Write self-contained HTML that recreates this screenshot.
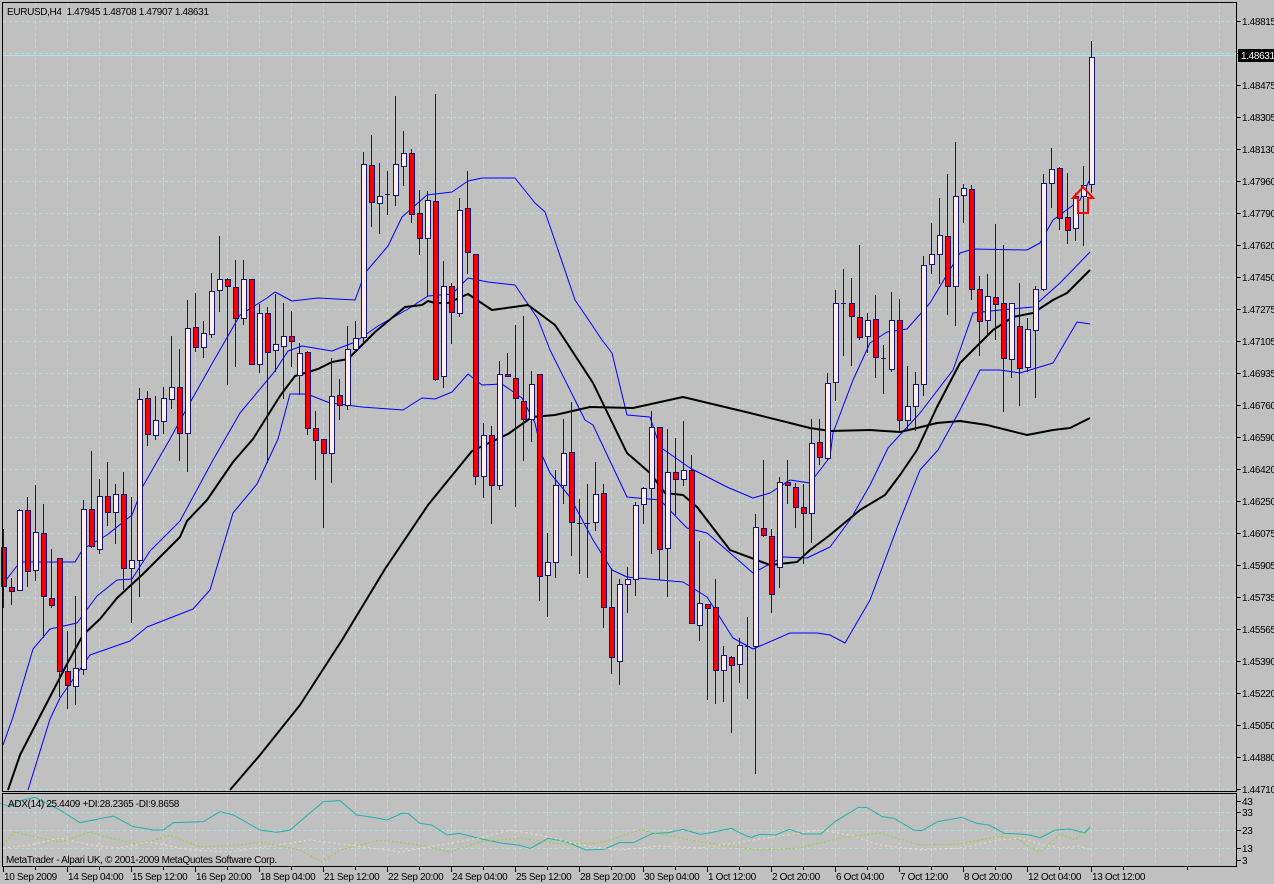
<!DOCTYPE html>
<html><head><meta charset="utf-8">
<style>
html,body{margin:0;padding:0;background:#c0c0c0;width:1274px;height:884px;overflow:hidden}
svg{display:block}
text{font-family:"Liberation Sans",Arial,sans-serif;font-size:10px;letter-spacing:-0.35px;fill:#000}
</style></head><body>
<svg id="s" width="1274" height="884" viewBox="0 0 1274 884" xmlns="http://www.w3.org/2000/svg">
<rect x="0" y="0" width="1274" height="884" fill="#c0c0c0"/>
<g id="grid" stroke="#a4e6e6" stroke-width="1" stroke-dasharray="3,3" fill="none"></g>
<line x1="3" y1="55.5" x2="1236" y2="55.5" stroke="#a4e6e6" stroke-width="1"/>
<g id="lines" fill="none"></g>
<g id="candles" shape-rendering="crispEdges"></g>
<path d="M1083,187 L1093,198 L1088,198 L1088,213 L1078,213 L1078,198 L1073,198 Z" fill="none" stroke="#ff0000" stroke-width="2"/>
<g id="ind" fill="none"></g>
<g id="frame" fill="none" stroke="#000" stroke-width="1" shape-rendering="crispEdges">
<rect x="2.5" y="2.5" width="1234" height="789"/>
<rect x="2.5" y="793.5" width="1234" height="73"/>
</g>
<g id="axis" shape-rendering="crispEdges"></g>
<text x="7" y="15" xml:space="preserve">EURUSD,H4  1.47945 1.48708 1.47907 1.48631</text>
<text x="8" y="807">ADX(14) 25.4409 +DI:28.2365 -DI:9.8658</text>
<text x="6" y="863">MetaTrader - Alpari UK, © 2001-2009 MetaQuotes Software Corp.</text>
</svg>
<script>
var NS="http://www.w3.org/2000/svg";
function el(p,t,a){var e=document.createElementNS(NS,t);for(var k in a)e.setAttribute(k,a[k]);p.appendChild(e);return e;}
var grid=document.getElementById('grid');
for(var x=35;x<1236;x+=32){el(grid,'line',{x1:x+.5,y1:3,x2:x+.5,y2:791});el(grid,'line',{x1:x+.5,y1:794,x2:x+.5,y2:866});}
for(var i=0;i<25;i++){var y=Math.round(20.5+32*i)+.5;el(grid,'line',{x1:3,y1:y,x2:1236,y2:y});}
[812,830,848].forEach(function(y){el(grid,'line',{x1:3,y1:y+.5,x2:1236,y2:y+.5});});
var ax=document.getElementById('axis');
var labs=["1.48815","1.48645","1.48475","1.48305","1.48130","1.47960","1.47790","1.47620","1.47450","1.47275","1.47105","1.46935","1.46760","1.46590","1.46420","1.46250","1.46075","1.45905","1.45735","1.45565","1.45390","1.45220","1.45050","1.44880","1.44710"];
for(var i=0;i<25;i++){var y=Math.round(20.5+32*i);el(ax,'line',{x1:1237,y1:y+.5,x2:1241,y2:y+.5,stroke:'#000'});if(i!=1){var t=el(ax,'text',{x:1242,y:y+4});t.textContent=labs[i];}}
el(ax,'rect',{x:1238,y:49,width:36,height:13,fill:'#000'});
var t=el(ax,'text',{x:1241,y:59,style:'fill:#fff'});t.textContent="1.48631";
[["43",801],["33",812],["23",830],["13",848],["3",860]].forEach(function(a){el(ax,'line',{x1:1237,y1:a[1]+.5,x2:1241,y2:a[1]+.5,stroke:'#000'});var t=el(ax,'text',{x:1242,y:a[1]+4});t.textContent=a[0];});
var dl=["10 Sep 2009","14 Sep 04:00","15 Sep 12:00","16 Sep 20:00","18 Sep 04:00","21 Sep 12:00","22 Sep 20:00","24 Sep 04:00","25 Sep 12:00","28 Sep 20:00","30 Sep 04:00","1 Oct 12:00","2 Oct 20:00","6 Oct 04:00","7 Oct 12:00","8 Oct 20:00","12 Oct 04:00","13 Oct 12:00"];
for(var j=0;j<dl.length;j++){var x=3+64*j;el(ax,'line',{x1:x+.5,y1:867,x2:x+.5,y2:872,stroke:'#000'});var t=el(ax,'text',{x:x+1,y:880});t.textContent=dl[j];}
for(var j=0;j<19;j++){var x=3+64*j+32;if(x<1236)el(ax,'line',{x1:x+.5,y1:867,x2:x+.5,y2:870,stroke:'#000'});}
var Z=[
[80,2.45,[[0,1145,1240,1100,1290,0],[1,1243,1252,1220,1285,0],[2,1053,1250,1050,1250,1],[3,1053,1203,1022,1240,0],[4,1108,1200,992,1225,1],[5,1110,1265,1040,1365,0],[6,1268,1287,1150,1290,0],[7,1172,1448,1170,1510,0],[8,1448,1482,1350,1538,0],[9,1440,1485,1265,1528,1],[10,1052,1442,1028,1455,1],[11,1050,1142,910,1143,0],[12,1020,1148,978,1160,1],[13,1020,1058,935,1090,0],[14,1015,1058,990,1135,1],[15,1015,1195,960,1248,0],[16,1175,1195,1022,1328,1],[17,782,1175,755,1265,1],[18,780,868,762,895,0],[19,833,870,773,880,1],[20,780,835,752,865,1],[21,752,782,628,803,1],[22,752,865,660,932,0],[23,608,865,540,958,1],[24,605,655,522,665,0],[25,620,655,590,678,1],[26,518,623,474,630,1],[27,488,515,382,565,1],[28,488,505,485,745,0],[29,508,583,440,700,0],[30,488,582,442,598,1],[31,488,695,488,695,0],[32,570,697,550,715,1],[33,572,667,555,935,0],[34,648,662,525,712,1]]],
[80,2.8,[[35,718,745,625,890,1],[36,718,732,648,800,0],[37,765,825,735,880,1],[38,762,975,760,990,0],[39,975,1008,928,1118,0],[40,1005,1045,1005,1252,0],[41,885,1045,778,1125,1],[42,883,910,838,950,0],[43,752,910,690,920,1],[44,722,752,675,760,1],[45,235,720,202,730,1],[46,238,342,155,408,0],[47,325,345,232,428,1],[48,320,323,255,375,1],[49,235,323,45,350,1],[50,205,242,143,295,1],[51,203,376,192,398,0],[52,373,442,308,487,0],[53,337,442,310,605,1],[54,340,838,40,840,0],[55,578,828,508,860,1],[56,578,650,568,735,0],[57,365,652,330,662,1],[58,358,482,255,540,0],[59,486,1110,486,1130,0],[60,995,1110,960,1168,1],[61,995,1135,970,1240,0],[62,822,1133,788,1145,1],[63,822,830,765,822,0],[64,833,890,685,1192,0],[65,900,950,660,1065,0],[66,850,950,815,1012,1],[67,822,1390,822,1455,0],[68,1350,1387,1268,1500,1]]],
[340,3,[[69,435,667,390,710,1],[70,340,435,237,490,1],[71,335,547,187,645,0],[72,549,551,478,698,0],[73,549,551,433,710,0],[74,463,547,367,570,1],[75,460,802,432,860,0],[76,800,952,685,1000,0],[77,733,963,718,1033,1],[78,718,733,682,815,1],[79,496,718,485,765,1],[80,445,493,440,548,1],[81,260,445,213,640,1],[82,262,628,262,718,0],[83,397,625,267,767,1],[84,397,418,293,523,0],[85,391,418,243,435,1],[86,391,850,345,850,0],[87,790,856,603,900,1],[88,793,805,795,1078,0],[89,802,990,717,1090,0],[90,946,990,918,1083,1],[91,950,975,948,1175,0],[92,916,972,895,1025,1],[93,919,921,832,1075,0],[94,562,918,522,1298,1],[95,565,585,360,588,0],[96,587,762,567,815,0],[97,425,680,410,740,1],[98,425,435,360,488,0],[99,440,502,430,562,0],[100,502,520,432,668,0],[101,310,520,238,605,1],[102,305,352,238,372,0]]],
[30,3,[[103,1058,1283,1030,1290,1],[104,820,1055,780,1110,1],[105,819,821,718,975,0],[106,820,858,745,1005,0],[107,862,920,645,928,0],[108,870,918,848,965,1],[109,868,980,795,1040,0],[110,984,986,945,1090,0],[111,870,1017,785,1022,1],[112,870,1170,808,1200,0],[113,1128,1170,1008,1195,1],[114,1062,1128,1025,1200,1],[115,706,1062,678,1095,1],[116,672,702,578,728,1],[117,615,672,505,758,1],[118,618,768,432,853,0],[119,498,768,337,885,1],[120,475,495,462,575,1],[121,478,776,465,808,0],[122,778,873,738,975,0],[123,797,870,732,918,1],[124,800,822,583,928,0],[125,820,985,645,1143,0],[126,820,988,818,1042,1],[127,888,1015,758,1125,0],[128,898,1012,865,1022,1],[129,778,900,768,1100,1],[130,458,778,432,780,1],[131,418,460,355,530,1],[132,413,565,412,598,0],[133,562,600,430,640,0],[134,498,595,490,630,1],[135,465,497,408,645,1],[136,80,462,33,485,1]]]
];
var cg=document.getElementById('candles');
Z.forEach(function(z){var o=z[0],s=z[1];z[2].forEach(function(c){
 var x=3+8*c[0];var bt=Math.round(o+c[1]/s),bb=Math.round(o+c[2]/s),wt=Math.round(o+c[3]/s),wb=Math.round(o+c[4]/s);
 if(wt>bt)wt=bt;if(wb<bb)wb=bb;
 el(cg,'line',{x1:x+.5,y1:wt,x2:x+.5,y2:wb+1,stroke:'#14146e'});
 var h=bb-bt;
 if(h<=1){el(cg,'line',{x1:x-2,y1:bt+.5,x2:x+3,y2:bt+.5,stroke:'#14146e'});}
 else el(cg,'rect',{x:x-2+.5,y:bt+.5,width:5,height:h,fill:c[5]?'#ffeeee':'#ff0000',stroke:'#14146e'});
});});
var lg=document.getElementById('lines');
function pl(pts,col,w){el(lg,'polyline',{points:pts.map(function(p){return p.join(',')}).join(' '),stroke:col,'stroke-width':w,'stroke-linejoin':'round'});}
pl([[3,584],[20,562],[75,562],[83,549],[107,535],[132,515],[143,486],[170,439],[187,408],[213,362],[240,315],[267,298],[275,292],[292,301],[318,298],[355,300],[365,273],[388,246],[402,217],[427,195],[452,192],[468,181],[482,178],[515,178],[535,203],[545,212],[555,241],[575,300],[590,322],[602,340],[612,353],[627,415],[650,417],[660,447],[690,468],[727,487],[753,498],[770,493],[790,480],[810,483],[830,457],[833,433],[853,380],[870,343],[887,332],[907,329],[930,303],[960,253],[973,249],[1027,250],[1040,243],[1053,220],[1080,200],[1092,175]],'#0000ff',1);
pl([[3,745],[13,717],[33,649],[50,629],[77,623],[97,596],[117,580],[132,579],[150,551],[180,521],[213,460],[240,413],[275,371],[288,351],[302,346],[332,351],[355,342],[378,326],[408,309],[428,296],[452,294],[468,278],[488,282],[515,285],[538,319],[550,350],[585,420],[593,425],[627,497],[660,500],[687,528],[707,533],[730,553],[753,573],[783,557],[807,558],[830,547],[850,520],[870,485],[888,448],[920,413],[953,370],[973,313],[1000,310],[1033,307],[1060,283],[1090,252]],'#0000ff',1);
pl([[28,790],[50,719],[60,698],[90,655],[130,641],[147,627],[193,609],[210,590],[233,513],[257,484],[278,439],[290,394],[307,394],[330,403],[362,407],[403,410],[422,398],[435,399],[452,392],[468,374],[482,385],[502,384],[522,398],[535,423],[542,455],[550,473],[570,497],[593,540],[612,570],[627,577],[660,580],[683,582],[707,597],[733,638],[753,649],[767,643],[790,633],[817,633],[830,635],[845,643],[870,600],[900,520],[920,470],[938,450],[960,410],[980,370],[1000,370],[1020,373],[1053,363],[1077,322],[1090,324]],'#0000ff',1);
pl([[8,790],[20,755],[38,720],[67,664],[83,635],[100,619],[117,598],[143,574],[180,537],[187,521],[207,500],[233,462],[253,439],[280,396],[295,376],[318,369],[332,362],[348,359],[375,332],[405,307],[422,305],[428,301],[435,303],[448,303],[468,294],[492,310],[528,305],[555,325],[565,340],[593,383],[627,453],[650,473],[665,493],[683,495],[697,507],[730,550],[770,565],[797,562],[810,550],[830,535],[860,510],[885,495],[900,475],[917,450],[937,407],[960,363],[973,350],[993,330],[1013,317],[1033,313],[1053,300],[1067,293],[1090,270]],'#000',2);
pl([[230,790],[260,755],[300,705],[342,640],[385,569],[428,505],[472,451],[508,434],[532,417],[555,415],[590,407],[633,408],[683,397],[750,413],[810,428],[830,431],[870,430],[900,432],[917,428],[937,423],[960,421],[987,425],[1027,435],[1053,430],[1070,428],[1090,418]],'#000',2);
var ig=document.getElementById('ind');
function ipl(pts,col,da){el(ig,'polyline',{points:pts.map(function(p){return p.join(',')}).join(' '),stroke:col,'stroke-width':1,'stroke-dasharray':da||'none'});}
var z3=[[0,70],[30,80],[60,62],[105,52],[130,65],[180,90],[240,128],[340,108],[400,140],[460,150],[490,150],[520,128],[610,125],[660,95],[700,105],[780,150],[830,157],[870,150],[970,65],[1020,62],[1070,105],[1120,112],[1160,120],[1200,103]].map(function(p){return [p[0]/3,780+p[1]/3]});
var z9=[[0,70],[20,70],[50,100],[80,105],[120,135],[150,130],[200,145],[260,160],[300,165],[330,175],[375,145],[420,155],[470,180],[515,178],[555,158],[590,158],[640,130],[680,128],[715,118],[760,133],[790,127],[838,115],[875,137],[890,142],[910,133],[950,135],[985,118],[1020,132],[1065,132],[1100,95],[1160,52],[1180,52],[1220,80],[1250,85],[1300,120],[1320,122],[1360,95],[1420,82],[1460,100],[1490,105],[1530,130],[1568,132]].map(function(p){return [400+p[0]/2.53,790+p[1]/3]});
ipl(z3.concat(z9,[[1030,835],[1040,838],[1055,830],[1070,829],[1085,833],[1090,827]]),'#20b2aa');
ipl([[3,845],[15,832],[40,838],[60,842],[90,832],[110,838],[140,845],[170,835],[200,847],[240,845],[260,842],[300,850],[322,862],[340,850],[380,840],[420,845],[450,852],[480,842],[520,838],[560,844],[600,843],[640,830],[680,838],[720,845],[760,850],[800,848],[840,838],[880,833],[920,845],[960,844],[1000,836],[1020,840],[1030,848],[1040,852],[1050,843],[1060,834],[1075,840],[1090,826]],'#9acd32','2,2');
ipl([[3,848],[30,845],[60,838],[90,845],[120,848],[150,842],[190,850],[230,852],[270,846],[310,840],[350,845],[400,852],[440,845],[480,838],[510,830],[540,835],[580,845],[620,850],[660,846],[700,848],[740,842],[780,836],[820,830],[850,835],[880,845],[920,850],[960,848],[1000,840],[1020,838],[1040,844],[1060,848],[1080,846],[1090,850]],'#f5deb3','2,3');
</script>
</body></html>
